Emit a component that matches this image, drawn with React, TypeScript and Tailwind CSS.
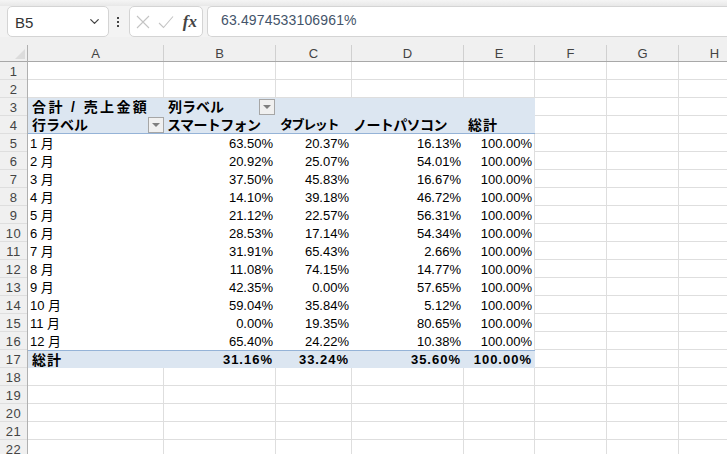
import React from "react";
import { LuChevronDown } from "react-icons/lu";

const colHeads = ["A", "B", "C", "D", "E", "F", "G", "H"];
const rowNums = Array.from({ length: 22 }, (_, i) => i + 1);
const gridCols = "grid-cols-[136px_112px_76px_112px_71px_72px_72px_72px]";

const months = [
  ["1 月", "63.50%", "20.37%", "16.13%"],
  ["2 月", "20.92%", "25.07%", "54.01%"],
  ["3 月", "37.50%", "45.83%", "16.67%"],
  ["4 月", "14.10%", "39.18%", "46.72%"],
  ["5 月", "21.12%", "22.57%", "56.31%"],
  ["6 月", "28.53%", "17.14%", "54.34%"],
  ["7 月", "31.91%", "65.43%", "2.66%"],
  ["8 月", "11.08%", "74.15%", "14.77%"],
  ["9 月", "42.35%", "0.00%", "57.65%"],
  ["10 月", "59.04%", "35.84%", "5.12%"],
  ["11 月", "0.00%", "19.35%", "80.65%"],
  ["12 月", "65.40%", "24.22%", "10.38%"],
];

const Filter = () => (
  <span className="flex h-[16px] w-[16px] shrink-0 items-center justify-center border border-[#a6a6a6] bg-[#f0f0f0]">
    <span className="h-0 w-0 border-x-[4px] border-t-[4px] border-x-transparent border-t-[#7f7f7f]" />
  </span>
);

const Cell = ({ children, right, bold, pivot, line, plain }: { children?: React.ReactNode; right?: boolean; bold?: boolean; pivot?: boolean; line?: string; plain?: boolean }) => (
  <div
    className={`flex h-[18px] items-center overflow-visible whitespace-nowrap px-[3px] text-[13px] leading-none text-black ${right ? "justify-end" : ""} ${bold ? "font-bold" : ""} ${pivot ? "bg-[#dce6f1]" : ""} ${plain ? "" : "border-b border-r border-[#dedede]"} ${line ?? ""}`}
  >
    {children}
  </div>
);

const Blank = () => <Cell />;

const underline = "border-b border-[#95b3d7]";
const overline = "border-t border-[#95b3d7] tracking-[1px]";

export default function App() {
  return (
    <div className="flex h-[454px] w-[727px] flex-col overflow-hidden bg-white font-['Liberation_Sans','Noto_Sans_CJK_JP',sans-serif]">
      <div className="flex h-[45px] shrink-0 flex-col bg-[#f0f0f0]">
        <div className="h-[6px] bg-gradient-to-b from-[#f5f5f5] to-[#e8e8e8]" />
        <div className="flex h-[31px] items-stretch bg-[#f3f3f3] pl-[7px]">
          <div className="flex w-[102px] items-center justify-between rounded-[5px] border border-[#d4d4d4] bg-white pl-[7px] pr-[6px] text-[15px] text-[#333]">
            <span className="pt-[3px]">B5</span>
            <LuChevronDown className="text-[15px] text-[#444]" />
          </div>
          <div className="flex w-[20px] flex-col items-center justify-center gap-[2px] pr-[2px]">
            <span className="h-[2px] w-[2px] bg-[#444]" />
            <span className="h-[2px] w-[2px] bg-[#444]" />
            <span className="h-[2px] w-[2px] bg-[#444]" />
          </div>
          <div className="flex w-[74px] items-center justify-between rounded-[5px] border border-[#d4d4d4] bg-white pl-[6px] pr-[5px]">
            <svg width="14" height="14" viewBox="0 0 14 14" fill="none" stroke="#c4c4c4" strokeWidth="1.1">
              <path d="M1 1L13 13M13 1L1 13" />
            </svg>
            <svg width="16" height="14" viewBox="0 0 16 14" fill="none" stroke="#c4c4c4" strokeWidth="1.1">
              <path d="M1 8L5.5 12.5L15 1.5" />
            </svg>
            <span className="font-['Liberation_Serif',serif] text-[17px] font-bold italic leading-none text-[#444]">fx</span>
          </div>
          <div className="ml-[4px] flex flex-1 items-center rounded-l-[5px] border border-r-0 border-[#d4d4d4] bg-white pb-[2px] pl-[13px] text-[14px] tracking-[0.15px] text-[#44546a]">
            63.4974533106961%
          </div>
        </div>
      </div>

      <div className="flex flex-1 overflow-hidden">
        <div className="flex w-[28px] shrink-0 flex-col border-r border-[#b0b0b0] bg-[#f0f0f0]">
          <div className="flex h-[17px] shrink-0 items-end justify-end border-b border-[#a8a8a8] pb-[2px] pr-[2px]">
            <svg width="10" height="10" viewBox="0 0 10 10">
              <path d="M10 0V10H0Z" fill="#dcdcdc" />
            </svg>
          </div>
          {rowNums.map((n) => (
            <div key={n} className="flex h-[18px] shrink-0 items-center justify-center border-b border-[#dedede] pt-[2px] text-[13px] leading-none tracking-[0.5px] text-[#444]">
              {n}
            </div>
          ))}
        </div>
        <div className="flex flex-1 flex-col">
          <div className={`grid h-[17px] shrink-0 ${gridCols} border-b border-[#a8a8a8] bg-[#f0f0f0]`}>
            {colHeads.map((c) => (
              <div key={c} className="flex items-center justify-center border-r border-[#d0d0d0] text-[13px] leading-none text-[#444]">
                {c}
              </div>
            ))}
          </div>
          <div className={`grid ${gridCols}`}>
            {Array.from({ length: 16 }, (_, i) => <Blank key={i} />)}

            <Cell pivot plain bold line="pl-[4px] text-[14px] tracking-[2.4px]">合計 / 売上金額</Cell>
            <Cell pivot plain bold line="pl-[4px] pr-[1px] text-[14px]">
              <span className="flex w-full items-center justify-between">列ラベル<Filter /></span>
            </Cell>
            <Cell pivot plain />
            <Cell pivot plain />
            <Cell pivot plain />
            <Blank /><Blank /><Blank />

            <Cell pivot plain bold line={`${underline} pl-[4px] pr-0 text-[14px]`}>
              <span className="flex w-full items-center justify-between">行ラベル<Filter /></span>
            </Cell>
            <Cell pivot plain bold line={`${underline} text-[14px] tracking-[-0.6px]`}>スマートフォン</Cell>
            <Cell pivot plain bold line={`${underline} pl-[4px] text-[13px] tracking-[-1.4px]`}>タブレット</Cell>
            <Cell pivot plain bold line={`${underline} pl-[1px] text-[14px] tracking-[-0.6px]`}>ノートパソコン</Cell>
            <Cell pivot plain bold line={`${underline} pl-[4px] text-[14px] tracking-[1px]`}>総計</Cell>
            <Blank /><Blank /><Blank />

            {months.map((m) => (
              <React.Fragment key={m[0]}>
                <Cell plain line="pl-[2px]">{m[0]}</Cell>
                <Cell plain right>{m[1]}</Cell>
                <Cell plain right>{m[2]}</Cell>
                <Cell plain right>{m[3]}</Cell>
                <Cell plain right line="border-r border-[#dedede] pr-[2px]">100.00%</Cell>
                <Blank /><Blank /><Blank />
              </React.Fragment>
            ))}

            <Cell pivot plain bold line="border-t border-[#95b3d7] pl-[4px] text-[14px] tracking-[1px]">総計</Cell>
            <Cell pivot plain bold right line={overline}>31.16%</Cell>
            <Cell pivot plain bold right line={overline}>33.24%</Cell>
            <Cell pivot plain bold right line={overline}>35.60%</Cell>
            <Cell pivot plain bold right line={overline}>100.00%</Cell>
            <Blank /><Blank /><Blank />

            {Array.from({ length: 40 }, (_, i) => <Blank key={i} />)}
          </div>
        </div>
      </div>
    </div>
  );
}
